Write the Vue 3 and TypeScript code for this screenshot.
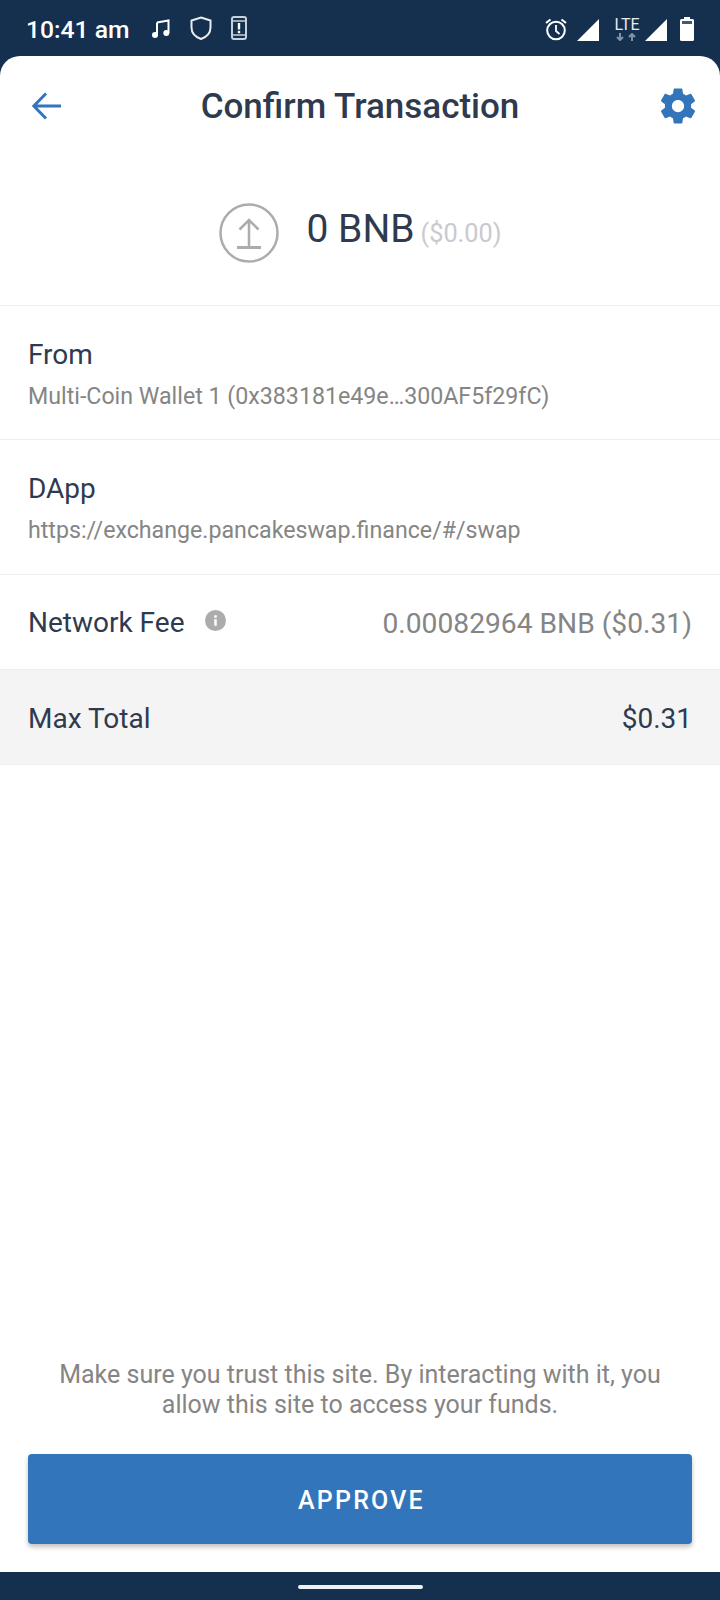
<template>
  <div class="screen">
    <div class="status-bar">
      <span class="clock">10:41 am</span>
      <svg class="st-icon music" viewBox="0 0 20 20" width="20" height="20">
        <path d="M6 3.500 17.500 1.500V14" fill="none" stroke="#fff" stroke-width="2" />
        <path d="M6 3.500V16" fill="none" stroke="#fff" stroke-width="2" />
        <circle cx="4" cy="16" r="3" fill="#fff" />
        <circle cx="15.300" cy="14" r="3" fill="#fff" />
      </svg>
      <svg class="st-icon shield" viewBox="0 0 22 24" width="22" height="24">
        <path d="M11 1.500 20.500 4.500V11.500C20.500 17 16.500 21 11 23 5.500 21 1.500 17 1.500 11.500V4.500Z" fill="none" stroke="#e8ebef" stroke-width="2" />
      </svg>
      <svg class="st-icon device" viewBox="0 0 16 24" width="16" height="24">
        <rect x="1" y="1" width="14" height="22" rx="2" fill="none" stroke="#c8d0da" stroke-width="2" />
        <path d="M1 5H15M1 19H15" stroke="#c8d0da" stroke-width="1.500" />
        <rect x="6.800" y="7" width="2.400" height="6.500" fill="#fff" />
        <rect x="6.800" y="14.800" width="2.400" height="2.400" fill="#fff" />
      </svg>
      <span class="spacer"></span>
      <svg class="alarm" viewBox="0 0 22 24" width="22" height="24">
        <circle cx="11" cy="13.500" r="8.800" fill="none" stroke="#fff" stroke-width="2" />
        <path d="M11 8V14L14.500 17" fill="none" stroke="#fff" stroke-width="1.800" />
        <path d="M1 6 5.500 2.500M21 6 16.500 2.500" stroke="#fff" stroke-width="2" />
      </svg>
      <svg class="signal first" viewBox="0 0 22 22" width="22" height="22">
        <path d="M22 0V22H0Z" fill="#fff" />
      </svg>
      <div class="lte">
        <span>LTE</span>
        <svg viewBox="0 0 22 8" width="22" height="8">
          <path d="M4 0V7M1 4 4 7 7 4" fill="none" stroke="#8292a6" stroke-width="2" />
          <path d="M16 8V1M13 4 16 1 19 4" fill="none" stroke="#8292a6" stroke-width="2" />
        </svg>
      </div>
      <svg class="signal" viewBox="0 0 22 22" width="22" height="22">
        <path d="M22 0V22H0Z" fill="#fff" />
      </svg>
      <svg class="battery" viewBox="0 0 14 24" width="14" height="24">
        <path d="M4 0H10V2H12.500A1.500 1.500 0 0 1 14 3.500V22.500A1.500 1.500 0 0 1 12.500 24H1.500A1.500 1.500 0 0 1 0 22.500V3.500A1.500 1.500 0 0 1 1.500 2H4Z" fill="#fff" />
        <rect x="2" y="4" width="10" height="3" fill="#15304f" opacity="0.800" />
      </svg>
    </div>

    <main class="card">
      <header class="top">
        <svg class="back" viewBox="0 0 30 28" width="30" height="28">
          <path d="M1.800 14H29M14 1.500 1.800 14 14 26.500" fill="none" stroke="#3375bb" stroke-width="3" />
        </svg>
        <h1>Confirm Transaction</h1>
        <svg class="gear" viewBox="0 0 24 24" width="42" height="42">
          <path fill="#3375bb" d="M19.430 12.980c.04-.32.070-.64.070-.98s-.03-.66-.07-.98l2.110-1.650c.19-.15.240-.42.120-.64l-2-3.460c-.12-.22-.39-.30-.61-.22l-2.490 1c-.52-.40-1.080-.73-1.690-.98l-.38-2.650A.49.49 0 0 0 14 2h-4c-.25 0-.46.180-.49.420l-.38 2.650c-.61.250-1.170.59-1.690.98l-2.490-1c-.23-.09-.49 0-.61.220l-2 3.460c-.13.220-.07.490.12.640l2.110 1.650c-.04.320-.07.650-.07.980s.03.660.07.980l-2.110 1.650c-.19.150-.24.420-.12.640l2 3.460c.12.220.39.300.61.220l2.490-1c.52.400 1.080.730 1.690.980l.38 2.650c.03.240.24.420.49.420h4c.25 0 .46-.18.49-.42l.38-2.650c.61-.25 1.170-.59 1.690-.98l2.490 1c.23.090.49 0 .61-.22l2-3.460c.12-.22.07-.49-.12-.64l-2.110-1.650zM12 15.500c-1.930 0-3.500-1.570-3.500-3.500s1.570-3.500 3.500-3.500 3.500 1.570 3.500 3.500-1.570 3.500-3.500 3.500z" />
        </svg>
      </header>

      <section class="amount">
        <svg class="send" viewBox="0 0 60 60" width="60" height="60">
          <circle cx="30" cy="30" r="28.500" fill="none" stroke="#acacac" stroke-width="2.500" />
          <path d="M30 43V17M20.500 26.500 30 17 39.500 26.500" fill="none" stroke="#acacac" stroke-width="2.500" />
          <path d="M18 44.500H42" stroke="#acacac" stroke-width="3" />
        </svg>
        <span class="value">0 BNB</span>
        <span class="fiat">($0.00)</span>
      </section>

      <section v-for="row in infoRows" :key="row.label" class="info">
        <div class="label">{{ row.label }}</div>
        <div class="sub">{{ row.value }}</div>
      </section>

      <section class="line fee">
        <span class="label">Network Fee</span>
        <svg class="tip" viewBox="0 0 20 20" width="21" height="21">
          <circle cx="10" cy="10" r="10" fill="#acacac" />
          <rect x="8.800" y="8.800" width="2.400" height="6.200" fill="#fff" />
          <rect x="8.800" y="5" width="2.400" height="2.400" fill="#fff" />
        </svg>
        <span class="fee-value">0.00082964 BNB ($0.31)</span>
      </section>

      <section class="line total">
        <span class="label">Max Total</span>
        <span class="label">$0.31</span>
      </section>

      <div class="bottom">
        <p class="notice">Make sure you trust this site. By interacting with it, you allow this site to access your funds.</p>
        <button class="approve" type="button">APPROVE</button>
      </div>
    </main>

    <div class="nav-bar"><span class="handle"></span></div>
  </div>
</template>

<script setup lang="ts">
interface InfoRow {
  label: string;
  value: string;
}

const infoRows: InfoRow[] = [
  { label: 'From', value: 'Multi-Coin Wallet 1 (0x383181e49e…300AF5f29fC)' },
  { label: 'DApp', value: 'https://exchange.pancakeswap.finance/#/swap' },
];
</script>

<style>
html,
body {
  margin: 0;
  background: #15304f;
}
</style>

<style scoped>
.screen {
  width: 720px;
  height: 1600px;
  display: flex;
  flex-direction: column;
  background: #15304f;
  font-family: Roboto, "Liberation Sans", sans-serif;
  overflow: hidden;
}

.status-bar {
  height: 56px;
  flex: none;
  display: flex;
  align-items: center;
  padding: 0 26px 0 26px;
  box-sizing: border-box;
  color: #fff;
}

.clock {
  font-size: 24.700px;
  font-weight: 500;
  margin-right: 21px;
  position: relative;
  top: 1px;
}

.st-icon {
  margin-right: 19px;
}

.music {
  margin-top: 1px;
}

.spacer {
  flex: 1;
}

.alarm {
  margin-top: 2px;
  margin-right: 10px;
}

.signal.first {
  margin-right: 17px;
}

.lte {
  width: 22px;
  margin-right: 7px;
  display: flex;
  flex-direction: column;
  align-items: center;
  font-size: 16px;
  line-height: 15px;
  color: #e8ebef;
  margin-top: 1px;
}

.lte svg {
  display: block;
  margin-top: 1px;
}

.battery {
  margin-left: 13px;
  margin-top: 2px;
}

.signal {
  margin-top: 4px;
}

.card {
  flex: 1;
  display: flex;
  flex-direction: column;
  background: #fff;
  border-radius: 20px 20px 0 0;
}

.top {
  height: 100px;
  flex: none;
  display: flex;
  align-items: center;
  justify-content: space-between;
  padding: 0 21px 0 32px;
}

.top h1 {
  margin: 0 0 -1px 1px;
  font-size: 35px;
  font-weight: 500;
  color: #2f3a4f;
}

.amount {
  height: 150px;
  flex: none;
  display: flex;
  align-items: center;
  justify-content: center;
  box-sizing: border-box;
  border-bottom: 1px solid #efefef;
}

.send {
  margin-left: 1px;
  margin-right: 27px;
  margin-top: 5px;
}

.value {
  font-size: 39px;
  color: #2f3a4f;
  margin-top: -4px;
}

.fiat {
  font-size: 25.300px;
  color: #c9c9cf;
  margin-left: 6px;
  margin-top: 6px;
}

.info {
  height: 134px;
  flex: none;
  padding: 33px 28px 0;
  box-sizing: border-box;
  border-bottom: 1px solid #efefef;
}

.info + .info {
  height: 135px;
}

.label {
  font-size: 28px;
  line-height: 32px;
  color: #2f3a4f;
}

.sub {
  margin-top: 11px;
  font-size: 23.200px;
  line-height: 28px;
  color: #858585;
}

.line {
  height: 95px;
  flex: none;
  display: flex;
  align-items: center;
  padding: 2px 28px 0;
  box-sizing: border-box;
  border-bottom: 1px solid #efefef;
}

.tip {
  margin-left: 20px;
  margin-top: -6px;
}

.fee-value {
  margin-left: auto;
  font-size: 28.200px;
  color: #858585;
}

.total {
  justify-content: space-between;
  padding-top: 4px;
  background: #f4f4f4;
}

.bottom {
  margin-top: auto;
  padding: 0 28px 28px;
}

.notice {
  margin: 0 0 34px;
  padding: 0 20px;
  text-align: center;
  font-size: 25px;
  line-height: 30px;
  color: #858585;
}

.approve {
  display: block;
  width: 100%;
  height: 90px;
  border: 0;
  padding: 3px 6px 0 9px;
  border-radius: 4px;
  background: #3375bb;
  color: #fff;
  font-family: inherit;
  font-size: 25px;
  font-weight: 500;
  letter-spacing: 2.200px;
  box-shadow: 0 3px 5px rgba(0, 0, 0, 0.25);
}

.nav-bar {
  height: 28px;
  flex: none;
  display: flex;
  justify-content: center;
  padding-top: 13px;
  box-sizing: border-box;
}

.handle {
  width: 125px;
  height: 4px;
  border-radius: 2px;
  background: #eef0f3;
}
</style>
